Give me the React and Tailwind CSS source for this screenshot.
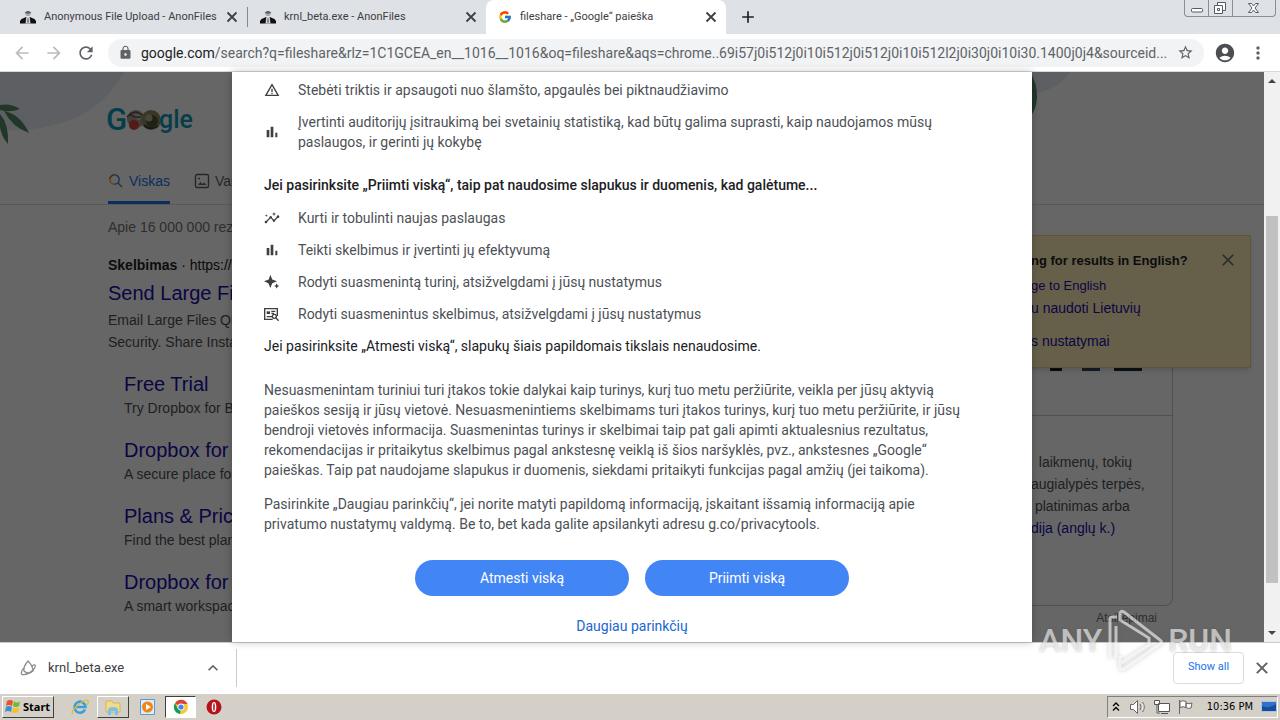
import React from "react";
import {
  MdArrowBack, MdArrowForward, MdRefresh, MdLock, MdStarBorder, MdAccountCircle,
  MdMoreVert, MdAdd, MdInsights, MdWarningAmber, MdKeyboardArrowUp,
} from "react-icons/md";
import { FcGoogle } from "react-icons/fc";

const uiFont = "font-[Roboto,'Open_Sans',sans-serif]";

function CrossIcon({ className, thickness }) {
  return (
    <svg viewBox="0 0 14 14" className={className} fill="none" stroke="currentColor" strokeWidth={thickness}>
      <path d="M2.500 2.500l9 9M11.500 2.500l-9 9" />
    </svg>
  );
}

function AnonIcon() {
  return (
    <svg viewBox="0 0 16 16" className="size-4 shrink-0">
      <circle cx="8" cy="4.500" r="2.600" fill="#a5a8ac" />
      <path d="M4.500 4Q8 0 11.500 4L8 4.800z" fill="#5b5e62" />
      <path d="M0 14.500V12Q1 9.500 4 9L6 8L8 10L10 8L12 9Q15 9.500 16 12V14.500z" fill="#111" />
      <path d="M6.200 8.500H9.800L10.500 14.500H5.500z" fill="#d2d4d8" />
      <path d="M7.500 9h1l.5 4-1 1-1-1z" fill="#77797d" />
    </svg>
  );
}

function BarsIcon() {
  return (
    <svg viewBox="0 0 24 24" className="size-4" fill="#3c4043">
      <path d="M4 9h4v11H4zM10 4h4v16h-4zM17 13h3v7h-3z" />
    </svg>
  );
}

function SparkIcon() {
  return (
    <svg viewBox="0 0 24 24" className="size-4" fill="#3c4043">
      <path d="M9.500 1l2.900 7.100L19.500 11l-7.100 2.900L9.500 21l-2.900-7.100L0 11l7.100-2.900zM19 14l1.300 2.700L23 18l-2.700 1.300L19 22l-1.300-2.700L15 18l2.700-1.300z" />
    </svg>
  );
}

function AdsIcon() {
  return (
    <svg viewBox="0 0 24 24" className="size-4" fill="none" stroke="#3c4043" strokeWidth="2">
      <path d="M13 20H1V4h19v11" />
      <path d="M4 8h5v4H4z" fill="#3c4043" stroke="none" />
      <path d="M11 8h6M11 11h4M4 16h8" />
      <circle cx="15.500" cy="15.500" r="3" />
      <path d="M18 18l4 4" />
    </svg>
  );
}

function ImageIcon() {
  return (
    <svg viewBox="0 0 16 16" className="size-4" fill="none" stroke="#5f6368" strokeWidth="1.400">
      <rect x="1.500" y="1.500" width="13" height="13" rx="1.500" />
      <path d="M4 12l2.500-3 2 2 1.500-1.500 2.500 2.500z" fill="#5f6368" stroke="none" />
      <circle cx="5" cy="5.500" r="1" fill="#5f6368" stroke="none" />
    </svg>
  );
}

function Tab({ icon, title, active, width }) {
  return (
    <div className={"flex h-full items-center pr-2 pl-3 " + width + (active ? " rounded-t-lg bg-white" : "")}>
      {icon}
      <span className="ml-2 flex-1 truncate">{title}</span>
      <button aria-label="Close tab" className="text-[#3c4043]"><CrossIcon className="size-3.5" thickness={1.8} /></button>
    </div>
  );
}

function WindowButtons() {
  return (
    <div className="flex h-[17px] self-start rounded-b border border-t-0 border-[#8a8d94]">
      <button aria-label="Minimize" className="w-6 border-r border-[#8a8d94]">
        <svg viewBox="0 0 24 16" className="h-4 w-6"><rect x="6.500" y="8.500" width="11" height="3.500" rx="1" fill="#fff" stroke="#555a66" /></svg>
      </button>
      <button aria-label="Restore" className="w-6 border-r border-[#8a8d94]">
        <svg viewBox="0 0 24 16" className="h-4 w-6" fill="#fff" stroke="#555a66"><path d="M8.500 2.500h8v8h-8z" /><path d="M5.500 5.500h8v8h-8z" /><path d="M8.500 8.500h2v2h-2z" /></svg>
      </button>
      <button aria-label="Close" className="w-[42px]">
        <svg viewBox="0 0 40 16" className="h-4 w-10"><path d="M15.500 3.500h3l2 2.500 2-2.500h3l-3.500 4.500 3.500 4.500h-3l-2-2.500-2 2.500h-3l3.500-4.500z" fill="#fff" stroke="#555a66" /></svg>
      </button>
    </div>
  );
}

function Doodle() {
  return (
    <svg viewBox="0 0 86 32" className="h-8 w-[86px]" role="img" aria-label="Google">
      <text x="-1" y="25" fontFamily="Roboto, sans-serif" fontWeight="500" fontSize="31" fill="#109ab8">G</text>
      <circle cx="29" cy="14" r="9" fill="#a59b8c" />
      <circle cx="32" cy="11" r="4" fill="#c9c2b6" />
      <circle cx="27" cy="20" r="5" fill="#d0453a" />
      <path d="M20 12q8-9 16-1M22 9q5 4 12 3" fill="none" stroke="#5d5344" strokeWidth="1.500" />
      <circle cx="44" cy="15" r="10" fill="#8f8d62" />
      <circle cx="45" cy="16" r="6" fill="#4d5636" />
      <circle cx="42" cy="13" r="3.500" fill="#b9ad8c" />
      <path d="M37 20q6 6 14 1" fill="none" stroke="#3f4a2c" strokeWidth="2" />
      <text x="52" y="23" fontFamily="Roboto, sans-serif" fontWeight="500" fontSize="25" fill="#109ab8">gle</text>
    </svg>
  );
}

const sublinks = [
  ["Free Trial", "Try Dropbox for Business"],
  ["Dropbox for Business", "A secure place for all"],
  ["Plans & Pricing", "Find the best plan for"],
  ["Dropbox for Teams", "A smart workspace for"],
];

function SearchPage() {
  return (
    <div className="relative flex h-full flex-col overflow-hidden bg-white font-['Liberation_Sans',Arial,sans-serif] text-sm text-[#4d5156]">
      <header className="relative flex h-[133px] shrink-0 flex-col justify-between border-b border-[#dadce0] pt-[33px] pl-[107px]">
        <svg viewBox="0 0 1264 133" className="absolute inset-0 h-full w-full" preserveAspectRatio="xMinYMin slice">
          <path d="M0 0H124Q100 44 50 54 25 60 0 58z" fill="#e8eef6" />
          <path d="M1032 0h38q-12 18-38 22z" fill="#e8eef6" />
          <path d="M1030 0q7 10 7 26-1 12-7 19z" fill="#558a68" />
          <path d="M0 33q11-2 20 4-10 4-20 1zM4 39q16 3 25 22-17-6-25-22zM0 42q9 10 8 30-7-8-8-17z" fill="#558a68" />
        </svg>
        <div className="relative"><Doodle /></div>
        <nav className="relative flex h-[43px] gap-6 pl-px text-sm">
          <a href="#all" className="flex items-center gap-[5px] border-b-[3px] border-[#1a73e8] text-[#1a73e8]">
            <svg viewBox="0 0 16 16" className="size-4" fill="none" strokeWidth="1.500">
              <path d="M6.500 1.800A4.700 4.700 0 0 0 1.800 6.500" stroke="#ea4335" />
              <path d="M1.800 6.500a4.700 4.700 0 0 0 4.700 4.700" stroke="#fbbc04" />
              <path d="M6.500 1.800a4.700 4.700 0 0 1 0 9.400" stroke="#4285f4" />
              <path d="M10 10l4 4" stroke="#34a853" />
            </svg>
            Viskas
          </a>
          <a href="#images" className="flex items-center gap-[5px] border-b-[3px] border-transparent text-[#5f6368]"><ImageIcon />Vaizdai</a>
        </nav>
      </header>
      <div className="flex min-h-0 flex-1 pl-[108px]">
        <main className="w-[652px] shrink-0">
          <p className="pt-3 leading-5 text-[#70757a]">Apie 16 000 000 rezultatų</p>
          <p className="mt-[17px] leading-[22px] text-[#202124]"><b>Skelbimas</b> · https://www.dropbox.com</p>
          <h3 className="mt-[3px] text-xl leading-7"><a href="#ad" className="text-[#1a0dab]">Send Large Files</a></h3>
          <p className="mt-0.5 leading-[22px]">Email Large Files Quickly<br />Security. Share Instantly</p>
          <ul className="mt-[18px] flex flex-col gap-[18px] pl-4">
            {sublinks.map(([t, d]) => (
              <li key={t}>
                <h3 className="text-xl leading-[26px]"><a href="#sub" className="text-[#1a0dab]">{t}</a></h3>
                <p className="leading-[22px]">{d}</p>
              </li>
            ))}
          </ul>
        </main>
        <aside className="ml-11 w-[369px] shrink-0">
          <div className="mt-[39px] h-[362px] rounded-lg border border-[#c4c7cb]">
            <div className="flex h-[171px] items-start justify-end gap-3.5 border-b border-[#c4c7cb] pt-[111px] pr-[30px]">
              <span className="h-[15px] w-3 bg-[#1e1e1e]" />
              <span className="ml-1.5 h-[15px] w-[18px] bg-[#32495f]" />
              <span className="h-[15px] w-7 bg-[#1c2a36]" />
            </div>
            <p className="pt-[35px] pl-[226px] leading-[22px] whitespace-pre">
              {"  laikmenų, tokių\naugialypės terpės,\n platinimas arba\n"}
              <a href="#wiki" className="text-[#1a0dab]">dija (anglų k.)</a>
            </p>
          </div>
          <p className="pt-1 pr-4 text-right text-xs leading-4 text-[#70757a]">Atsiliepimai</p>
        </aside>
      </div>
      <section className="absolute top-[163px] right-[13px] h-[133px] w-[371px] border border-[#f0d28c] bg-[#fff0b9] pt-[15px] pl-[150px] shadow-md">
        <button aria-label="Close" className="absolute top-4 right-3.5 text-[#777]"><CrossIcon className="size-4" thickness={1.5} /></button>
        <p className="text-[13px] leading-5 font-bold text-[#222]">ng for results in English?</p>
        <p className="mt-1 text-[13px] leading-[22px]"><a href="#en" className="text-[#1a0dab]">ge to English</a></p>
        <p className="leading-[22px]"><a href="#lt" className="text-[#1a0dab]">u naudoti Lietuvių</a></p>
        <p className="mt-[11px] leading-[22px]"><a href="#settings" className="text-[#1a0dab]">s nustatymai</a></p>
      </section>
    </div>
  );
}

function Row({ icon, children }) {
  return (
    <li className="flex items-center gap-[18px]">
      <span className="w-4 shrink-0">{icon}</span>
      <span>{children}</span>
    </li>
  );
}

function ConsentDialog() {
  return (
    <div role="dialog" aria-label="Slapukai" className="h-full w-[800px] overflow-hidden bg-white px-8 pt-2 font-[Roboto,sans-serif] text-sm leading-5 text-[#4d5156] shadow-[0_0_8px_rgba(0,0,0,0.25)]">
      <ul className="flex flex-col gap-3">
        <Row icon={<MdWarningAmber size={16} color="#3c4043" />}>Stebėti triktis ir apsaugoti nuo šlamšto, apgaulės bei piktnaudžiavimo</Row>
        <Row icon={<BarsIcon />}>Įvertinti auditorijų įsitraukimą bei svetainių statistiką, kad būtų galima suprasti, kaip naudojamos mūsų<br />paslaugos, ir gerinti jų kokybę</Row>
      </ul>
      <h2 className="mt-[23px] font-medium text-[#202124]">Jei pasirinksite „Priimti viską“, taip pat naudosime slapukus ir duomenis, kad galėtume...</h2>
      <ul className="mt-[13px] flex flex-col gap-3">
        <Row icon={<MdInsights size={16} color="#3c4043" />}>Kurti ir tobulinti naujas paslaugas</Row>
        <Row icon={<BarsIcon />}>Teikti skelbimus ir įvertinti jų efektyvumą</Row>
        <Row icon={<SparkIcon />}>Rodyti suasmenintą turinį, atsižvelgdami į jūsų nustatymus</Row>
        <Row icon={<AdsIcon />}>Rodyti suasmenintus skelbimus, atsižvelgdami į jūsų nustatymus</Row>
      </ul>
      <p className="mt-3 text-[#202124]">Jei pasirinksite „Atmesti viską“, slapukų šiais papildomais tikslais nenaudosime.</p>
      <p className="mt-6">
        Nesuasmenintam turiniui turi įtakos tokie dalykai kaip turinys, kurį tuo metu peržiūrite, veikla per jūsų aktyvią<br />
        paieškos sesiją ir jūsų vietovė. Nesuasmenintiems skelbimams turi įtakos turinys, kurį tuo metu peržiūrite, ir jūsų<br />
        bendroji vietovės informacija. Suasmenintas turinys ir skelbimai taip pat gali apimti aktualesnius rezultatus,<br />
        rekomendacijas ir pritaikytus skelbimus pagal ankstesnę veiklą iš šios naršyklės, pvz., ankstesnes „Google“<br />
        paieškas. Taip pat naudojame slapukus ir duomenis, siekdami pritaikyti funkcijas pagal amžių (jei taikoma).
      </p>
      <p className="mt-3.5">
        Pasirinkite „Daugiau parinkčių“, jei norite matyti papildomą informaciją, įskaitant išsamią informaciją apie<br />
        privatumo nustatymų valdymą. Be to, bet kada galite apsilankyti adresu g.co/privacytools.
      </p>
      <div className="mt-[26px] flex justify-center gap-4 text-white">
        <button className="h-9 w-[214px] rounded-full bg-[#4285f4]">Atmesti viską</button>
        <button className="h-9 w-[204px] rounded-full bg-[#4285f4]">Priimti viską</button>
      </div>
      <p className="mt-5 text-center"><a href="#more" className="text-[#1967d2]">Daugiau parinkčių</a></p>
    </div>
  );
}

function Scrollbar() {
  return (
    <div className="flex w-4 shrink-0 flex-col items-center bg-[#f1f1f1]">
      <svg viewBox="0 0 16 16" className="size-4"><path d="M4 11l4-4 4 4z" fill="#444" /></svg>
      <div className="h-32" />
      <div className="w-3 flex-[366] bg-[#c1c1c1]" />
      <div className="flex-[43]" />
      <svg viewBox="0 0 16 16" className="size-4"><path d="M4 5l4 4 4-4z" fill="#444" /></svg>
    </div>
  );
}

function Watermark() {
  return (
    <div className="pointer-events-none absolute right-12 bottom-12 flex items-center gap-1 font-[Roboto,sans-serif] text-[32px] leading-[60px] font-medium text-white/60 [text-shadow:0_0_3px_rgba(90,90,90,0.45)]">
      <span>ANY</span>
      <svg viewBox="0 0 58 64" className="h-16 w-[58px] [filter:drop-shadow(0_0_2px_rgba(90,90,90,0.5))]" fill="none" stroke="#fff" strokeOpacity="0.600" strokeWidth="3">
        <path d="M4 50V11q0-2 2-2h5M10 50V18" />
        <path d="M14 48v12q1 2 4 1l36-25q3-2 0-4L18 4q-4-2-4 2v6l29 18v7L15 55" />
      </svg>
      <span>RUN</span>
    </div>
  );
}

function DownloadBar() {
  return (
    <div className={"flex h-[51px] shrink-0 items-center border-t border-[#c8cbd0] bg-white pb-px pl-5 text-xs text-[#3c4043] " + uiFont}>
      <svg viewBox="0 0 18 18" className="size-[18px]" fill="none" stroke="#8b8e92" strokeWidth="1.300">
        <path d="M8 2Q3 8 4 12q4 4 9 0Q13 7 8 2z" />
        <path d="M4 9Q0 13 2 15.500q6 1 12-5.500 2-3 1-4-1-.5-3 1" />
      </svg>
      <span className="ml-2.5 w-[155px] text-[13px]">krnl_beta.exe</span>
      <button aria-label="Download options"><MdKeyboardArrowUp size={20} color="#5f6368" /></button>
      <span className="ml-[13px] h-[38px] w-px bg-[#c8cbd0]" />
      <button className="mr-2.5 ml-auto h-8 w-[71px] rounded border border-[#dadce0] text-[11px] text-[#1a73e8]">Show all</button>
      <button aria-label="Close downloads" className="mr-2.5 text-[#5f6368]"><CrossIcon className="size-4" thickness={1.8} /></button>
    </div>
  );
}

function Taskbar() {
  const raised = "border border-t-white border-l-white border-r-[#404040] border-b-[#404040]";
  return (
    <div className="flex h-[27px] shrink-0 items-center border-t border-white bg-[#d4d0c8] pl-0.5 font-['DejaVu_Sans_Condensed','DejaVu_Sans',sans-serif] text-[11px] text-black">
      <button className={"flex h-[22px] w-[52px] items-center gap-0.5 pl-0.5 font-bold " + raised}>
        <svg viewBox="0 0 16 16" className="size-4 shrink-0">
          <path d="M2 2q3-2 6 0L7 7Q4 5 1 7z" fill="#e8532a" /><path d="M9 2.500q3 2 6 0L14 7q-3 2-6 0z" fill="#76b82e" />
          <path d="M1 8q3-2 6 0L6 13Q3 11 0 13z" fill="#3a8fd8" /><path d="M8 8.500q3 2 6 0L13 13q-3 2-6 0z" fill="#f8c021" />
        </svg>
        <span className="font-['Noto_Sans',sans-serif]">Start</span>
      </button>
      <button aria-label="Internet Explorer" className="ml-4">
        <svg viewBox="0 0 20 20" className="size-5" fill="none"><path d="M15 12.500A5.500 5.500 0 1 1 15.500 10H6" stroke="#38a0dc" strokeWidth="2.600" /><path d="M3 17Q0 15 8 8t10-4q1 1-1 4" stroke="#e8b92c" strokeWidth="1.300" /></svg>
      </button>
      <button aria-label="Explorer" className={"ml-[7px] flex h-[22px] w-8 items-center justify-center " + raised}>
        <svg viewBox="0 0 18 18" className="size-[18px]"><path d="M2 3h6l1 2h7v9H2z" fill="#f3dc86" stroke="#c9a940" strokeWidth=".7" /><path d="M4 17v-5q0-3 5-3t5 3v5h-3v-4H7v4z" fill="#79c1e8" /></svg>
      </button>
      <button aria-label="Media Player" className="ml-2.5">
        <svg viewBox="0 0 18 18" className="size-[18px]"><path d="M1.500 1.500h14v15h-14z" fill="#dcebf7" stroke="#5b9bd1" /><circle cx="8.500" cy="9" r="5.500" fill="#f08519" /><path d="M7 6l5 3-5 3z" fill="#fff" /></svg>
      </button>
      <button aria-label="Chrome" className="ml-2 flex h-[22px] w-[31px] items-center justify-center border border-t-[#404040] border-r-white border-b-white border-l-[#404040] bg-white">
        <svg viewBox="0 0 16 16" className="size-4"><circle cx="8" cy="8" r="7" fill="#f7c92e" /><path d="M8 8L2 4.300A7 7 0 0 1 14.500 5H8z" fill="#db4437" /><path d="M8 8L7 15A7 7 0 0 1 2 4.300L5 10z" fill="#0f9d58" /><circle cx="8" cy="8" r="3.400" fill="#fff" /><circle cx="8" cy="8" r="2.600" fill="#4285f4" /></svg>
      </button>
      <button aria-label="Opera" className="ml-2.5">
        <svg viewBox="0 0 16 16" className="size-4"><circle cx="8" cy="8" r="7.500" fill="#b5121b" /><ellipse cx="8" cy="8" rx="2.300" ry="5" fill="#fff" /><ellipse cx="8" cy="8" rx=".8" ry="4" fill="#b5121b" /></svg>
      </button>
      <div className="mr-0.5 ml-auto flex h-[22px] items-center border border-t-[#808080] border-r-white border-b-white border-l-[#808080] pl-[3px]">
        <svg viewBox="0 0 10 12" className="h-3 w-2.5" fill="none" stroke="#000" strokeWidth="1.300"><path d="M2 5l3-3 3 3M2 9.500l3-3 3 3" /></svg>
        <svg viewBox="0 0 18 16" className="ml-2 h-4 w-[18px]" fill="#fff" stroke="#666"><path d="M1.500 5.500h3l4-4v13l-4-4h-3zM11 5q2 3 0 6M13.500 3q3.500 5 0 10" /></svg>
        <svg viewBox="0 0 18 16" className="ml-1.5 h-4 w-[18px]" fill="#fff" stroke="#555"><path d="M5.500 4.500h11v8h-11zM8 14.500h7M1.500 1.500h5v4h-5zM4 6v8h3" /></svg>
        <svg viewBox="0 0 18 16" className="ml-1.5 h-4 w-[18px]" fill="#fff" stroke="#666"><path d="M2.500 1v14M3 2.500q3-1.500 6 0v6q-3-1.500-6 0zM9 4q3 1.500 6 0l-1 5q-3 1-5-.5z" /></svg>
        <span className="mr-2 ml-3">10:36 PM</span>
        <svg viewBox="0 0 16 14" className="h-3.5 w-4"><path d="M.5 1.500h15v10H.5z" fill="#2d73c9" stroke="#a9c4e6" /><path d="M1 11V6q7 3 14-2v7z" fill="#174d9c" /></svg>
      </div>
    </div>
  );
}

export default function App() {
  return (
    <div className="relative flex h-screen flex-col overflow-hidden bg-white">
      <div className={"flex h-[34px] shrink-0 items-center bg-[#dee1e6] pr-1 pl-2 text-[11px] text-[#3c4043] " + uiFont}>
        <Tab width="w-[239px]" icon={<AnonIcon />} title="Anonymous File Upload - AnonFiles" />
        <span className="h-5 w-px bg-[#85888d]" />
        <Tab width="w-[238px]" icon={<AnonIcon />} title="krnl_beta.exe - AnonFiles" />
        <Tab width="w-[240px]" active icon={<FcGoogle size={14} />} title="fileshare - „Google“ paieška" />
        <button aria-label="New tab" className="ml-3 text-[#202124]"><MdAdd size={20} /></button>
        <div className="ml-auto self-start"><WindowButtons /></div>
      </div>
      <div className={"flex h-[38px] shrink-0 items-center border-b border-[#d5d8dc] px-3 text-[#5f6368] " + uiFont}>
        <button aria-label="Back" className="text-[#babcbe]"><MdArrowBack size={20} /></button>
        <button aria-label="Forward" className="ml-3 text-[#babcbe]"><MdArrowForward size={20} /></button>
        <button aria-label="Reload" className="ml-3"><MdRefresh size={20} /></button>
        <div className="ml-3 flex h-7 min-w-0 flex-1 items-center rounded-full bg-[#f1f3f4] px-2.5 text-sm">
          <MdLock size={15} className="shrink-0" />
          <span className="ml-2 flex-1 truncate">
            <span className="text-[#202124]">google.com</span>/search?q=fileshare&amp;rlz=1C1GCEA_en__1016__1016&amp;oq=fileshare&amp;aqs=chrome..69i57j0i512j0i10i512j0i512j0i10i512l2j0i30j0i10i30.1400j0j4&amp;sourceid...
          </span>
          <button aria-label="Bookmark" className="ml-1"><MdStarBorder size={17} /></button>
        </div>
        <button aria-label="Profile" className="ml-2.5 text-[#4b4f54]"><MdAccountCircle size={22} /></button>
        <button aria-label="Menu" className="ml-3"><MdMoreVert size={20} /></button>
      </div>
      <div className="flex min-h-0 flex-1">
        <div className="relative min-w-0 flex-1">
          <SearchPage />
          <div className="absolute inset-0 flex justify-center bg-black/60">
            <ConsentDialog />
          </div>
        </div>
        <Scrollbar />
      </div>
      <DownloadBar />
      <Taskbar />
      <Watermark />
    </div>
  );
}
